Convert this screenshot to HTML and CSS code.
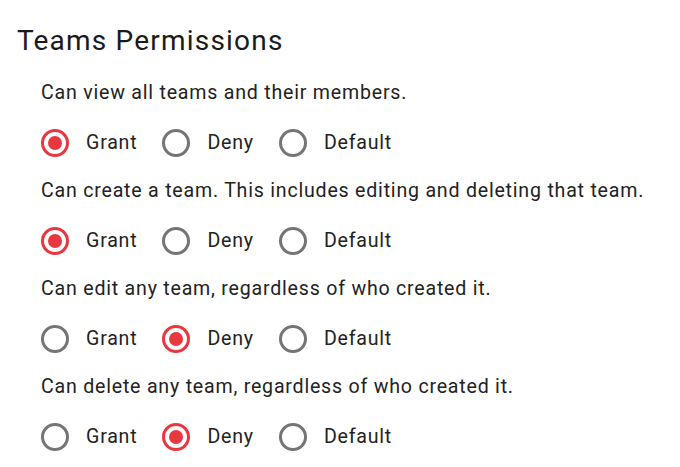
FILE: index.html
```html
<!DOCTYPE html>
<html>
<head>
<meta charset="utf-8">
<link rel="stylesheet" href="styles.css">
</head>
<body>
<div class="panel">
  <h2 class="title">Teams Permissions</h2>
  <div class="groups">
    <div class="group">
      <p class="desc">Can view all teams and their members.</p>
      <div class="options">
        <label class="opt"><input type="radio" name="g1" checked><span>Grant</span></label>
        <label class="opt"><input type="radio" name="g1"><span>Deny</span></label>
        <label class="opt"><input type="radio" name="g1"><span>Default</span></label>
      </div>
    </div>
    <div class="group">
      <p class="desc">Can create a team. This includes editing and deleting that team.</p>
      <div class="options">
        <label class="opt"><input type="radio" name="g2" checked><span>Grant</span></label>
        <label class="opt"><input type="radio" name="g2"><span>Deny</span></label>
        <label class="opt"><input type="radio" name="g2"><span>Default</span></label>
      </div>
    </div>
    <div class="group">
      <p class="desc">Can edit any team, regardless of who created it.</p>
      <div class="options">
        <label class="opt"><input type="radio" name="g3"><span>Grant</span></label>
        <label class="opt"><input type="radio" name="g3" checked><span>Deny</span></label>
        <label class="opt"><input type="radio" name="g3"><span>Default</span></label>
      </div>
    </div>
    <div class="group">
      <p class="desc">Can delete any team, regardless of who created it.</p>
      <div class="options">
        <label class="opt"><input type="radio" name="g4"><span>Grant</span></label>
        <label class="opt"><input type="radio" name="g4" checked><span>Deny</span></label>
        <label class="opt"><input type="radio" name="g4"><span>Default</span></label>
      </div>
    </div>
  </div>
</div>
</body>
</html>
```
FILE: styles.css
```css
html, body {
  margin: 0;
  padding: 0;
  background: #ffffff;
}
body {
  font-family: Roboto, "Liberation Sans", sans-serif;
  color: #222222;
}
.panel {
  padding: 23px 17px 0 17px;
}
.title {
  margin: 0;
  font-size: 28px;
  line-height: 36px;
  font-weight: 450;
  letter-spacing: 1.2px;
  color: #1a1a1a;
}
.groups {
  display: flex;
  flex-direction: column;
  gap: 20px;
  padding-left: 24px;
  margin-top: 20px;
}
.group {
  display: flex;
  flex-direction: column;
  gap: 22px;
}
.desc {
  margin: 0;
  font-size: 19.6px;
  line-height: 28px;
  letter-spacing: 0.78px;
}
.options {
  display: flex;
  align-items: center;
  gap: 25px;
  height: 28px;
}
.opt {
  display: flex;
  align-items: center;
  gap: 17px;
  font-size: 19.6px;
  line-height: 28px;
  letter-spacing: 0.78px;
}
.opt input {
  appearance: none;
  -webkit-appearance: none;
  margin: 0;
  width: 28px;
  height: 28px;
  box-sizing: border-box;
  border: 3px solid #757575;
  border-radius: 50%;
  position: relative;
  flex: none;
}
.opt input:checked {
  border-color: #e8373f;
}
.opt input:checked::after {
  content: "";
  position: absolute;
  left: 50%;
  top: 50%;
  width: 14px;
  height: 14px;
  margin: -7px 0 0 -7px;
  border-radius: 50%;
  background: #e8373f;
}
```
